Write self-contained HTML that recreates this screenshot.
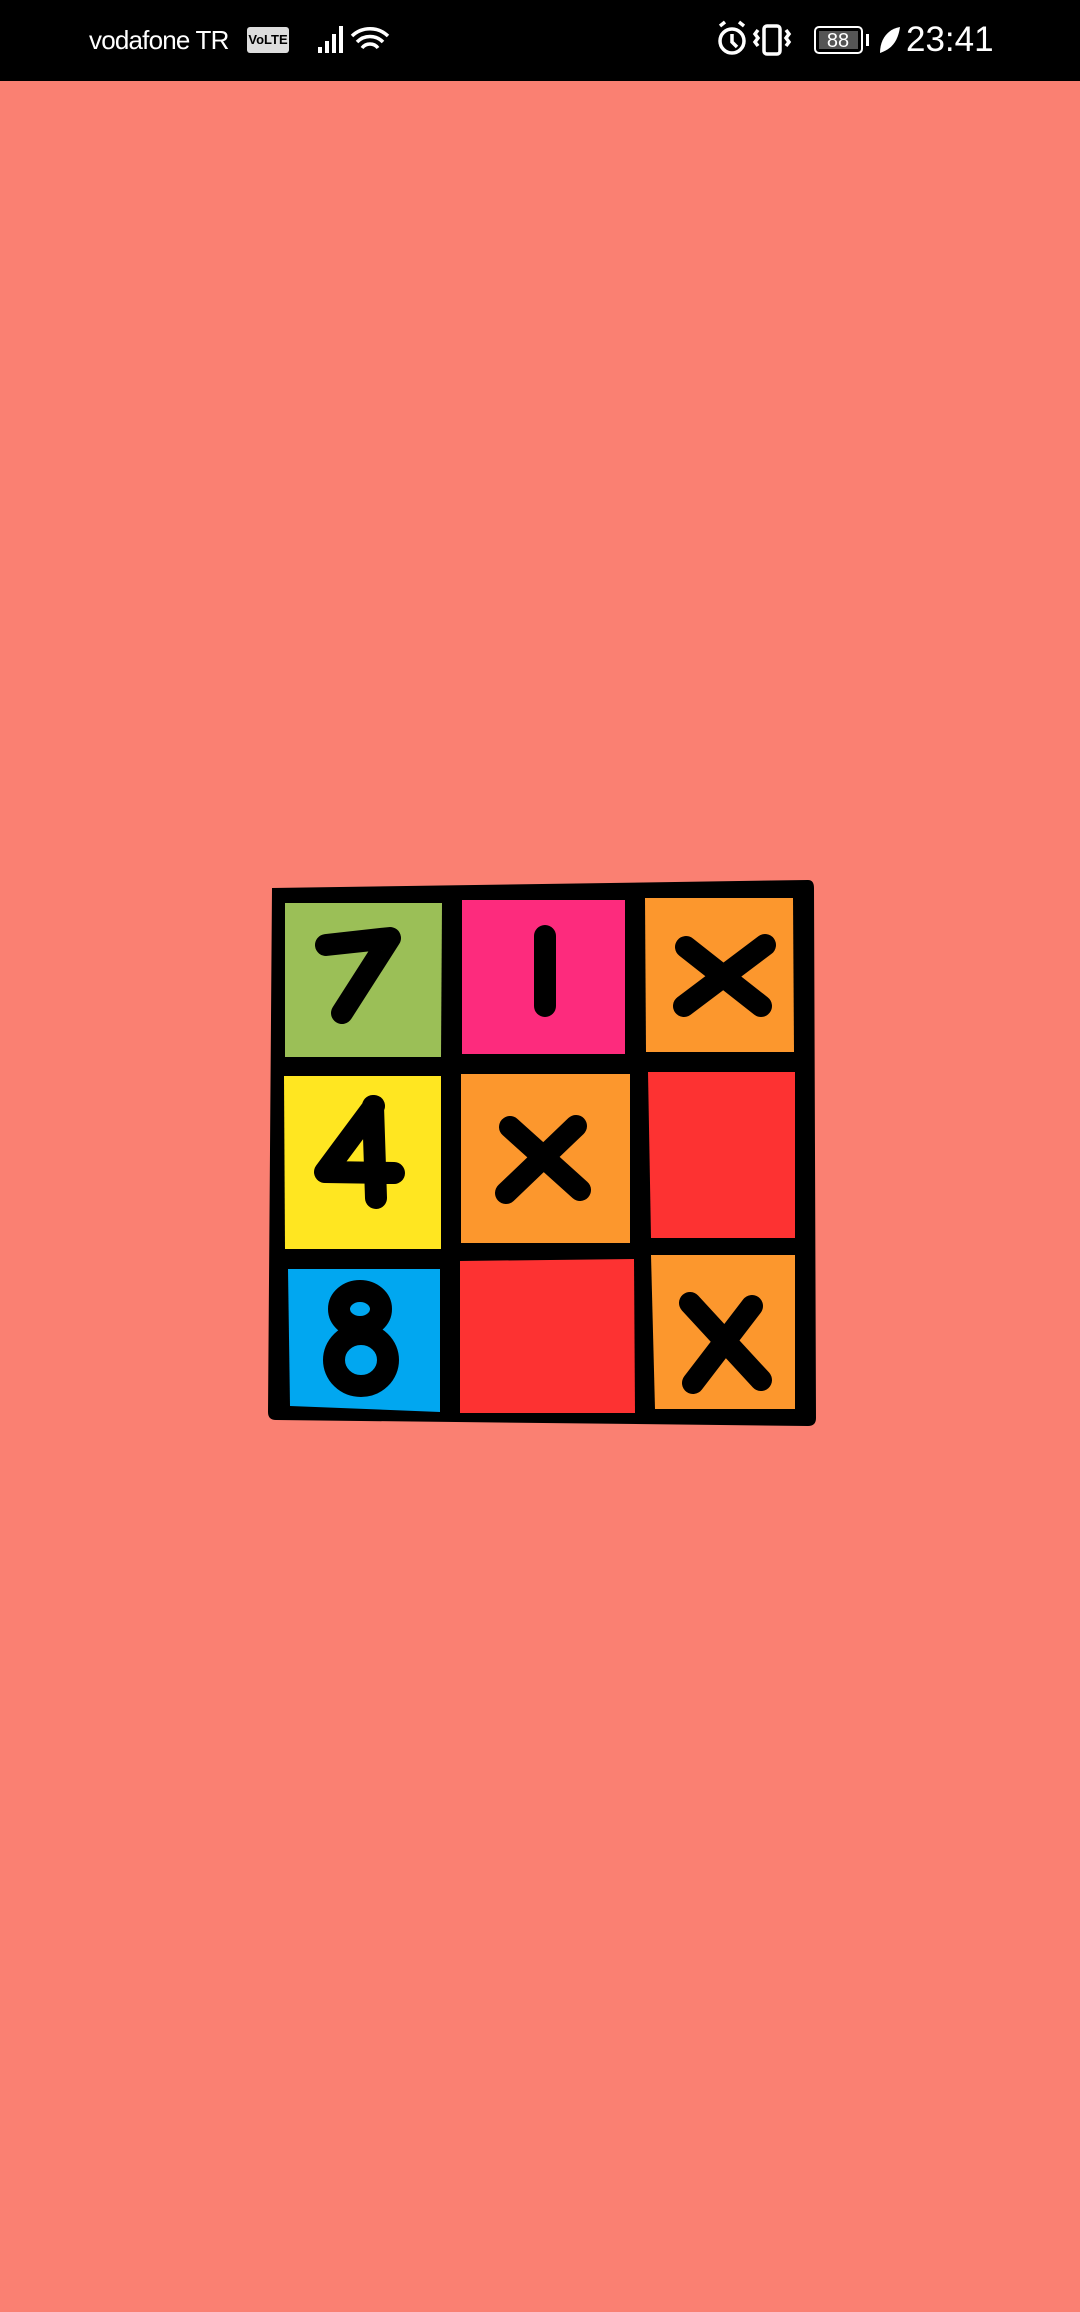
<!DOCTYPE html>
<html><head><meta charset="utf-8"><style>
html,body{margin:0;padding:0;width:1080px;height:2312px;background:#FA8072;overflow:hidden;font-family:"Liberation Sans",sans-serif}
.sb{position:absolute;left:0;top:0;width:1080px;height:81px;background:#000;color:#fff}
.t{position:absolute;white-space:nowrap}
</style></head><body>
<div class="sb">
<div class="t" style="left:89px;top:25px;font-size:26px;letter-spacing:-0.8px">vodafone TR</div>
<div class="t" style="left:247px;top:27px;width:42px;height:26px;background:#ddd;border-radius:3px;color:#000;font-size:13px;font-weight:bold;text-align:center;line-height:26px">VoLTE</div>
<svg style="position:absolute;left:0;top:0" width="1080" height="81">
<g fill="#fff"><rect x="318" y="47" width="4" height="6"/><rect x="325" y="41" width="4" height="12"/><rect x="332" y="34" width="4" height="19"/><rect x="339" y="26" width="4" height="27"/></g>
<g fill="none" stroke="#fff" stroke-width="3.5"><path d="M352 36a26 26 0 0 1 36 0M357 42a18 18 0 0 1 26 0M362 48a10 10 0 0 1 16 0"/>
<circle cx="732" cy="41" r="12"/><path d="M732 34v8l5 5M720 26l5-4M744 26l-5-4"/>
<rect x="764" y="26" width="16" height="28" rx="3"/><path d="M758 30l-3 4 3 4-3 4 3 4M786 30l3 4-3 4 3 4-3 4"/>
<rect x="815" y="27" width="47" height="26" rx="4" stroke-width="2"/></g>
<rect x="819" y="31" width="39" height="18" fill="#555"/>
<rect x="866" y="34" width="3" height="12" fill="#fff"/>
<path d="M880 53c0-14 8-24 20-26-2 14-8 22-20 26z" fill="#fff"/>
<text x="838" y="47" font-size="20" fill="#fff" text-anchor="middle" font-family="Liberation Sans">88</text>
</svg>
<div class="t" style="left:906px;top:20px;font-size:35px">23:41</div>
</div>
<svg style="position:absolute;left:0;top:0" width="1080" height="2312">
<path d="M272 888 L808 880 Q814 880 814 888 L816 1418 Q816 1426 808 1426 L276 1420 Q268 1420 268 1412 Z" fill="#000"/>
<polygon points="285,903 442,903 441,1057 285,1057" fill="#9BBF57"/>
<polygon points="462,900 625,900 625,1054 462,1054" fill="#FD2B7D"/>
<polygon points="645,898 793,898 794,1052 646,1052" fill="#FC972D"/>
<polygon points="284,1076 441,1076 441,1249 285,1249" fill="#FFE621"/>
<polygon points="461,1074 630,1074 630,1243 461,1243" fill="#FC972D"/>
<polygon points="648,1072 795,1072 795,1238 651,1238" fill="#FD3232"/>
<polygon points="288,1269 440,1269 440,1412 290,1406" fill="#01A7F0"/>
<polygon points="460,1261 634,1259 635,1413 460,1413" fill="#FD3232"/>
<polygon points="651,1255 795,1255 795,1409 655,1409" fill="#FC972D"/>
<g fill="none" stroke="#000" stroke-width="22" stroke-linecap="round" stroke-linejoin="round">
<path d="M326 945 L390 938 L342 1013"/>
<path d="M545 936 L545 1006"/>
<path d="M686 947 L761 1006 M684 1006 L765 945"/>
<path d="M510 1127 L580 1190 M506 1193 L576 1126"/>
<path d="M374 1106 L325 1172 L394 1173 M373 1106 L376 1198"/>
<path d="M690 1303 L761 1380 M752 1306 L693 1383"/>
<ellipse cx="360" cy="1309" rx="21" ry="18"/>
<ellipse cx="361" cy="1360" rx="27" ry="26"/>
</g>
</svg>
</body></html>
